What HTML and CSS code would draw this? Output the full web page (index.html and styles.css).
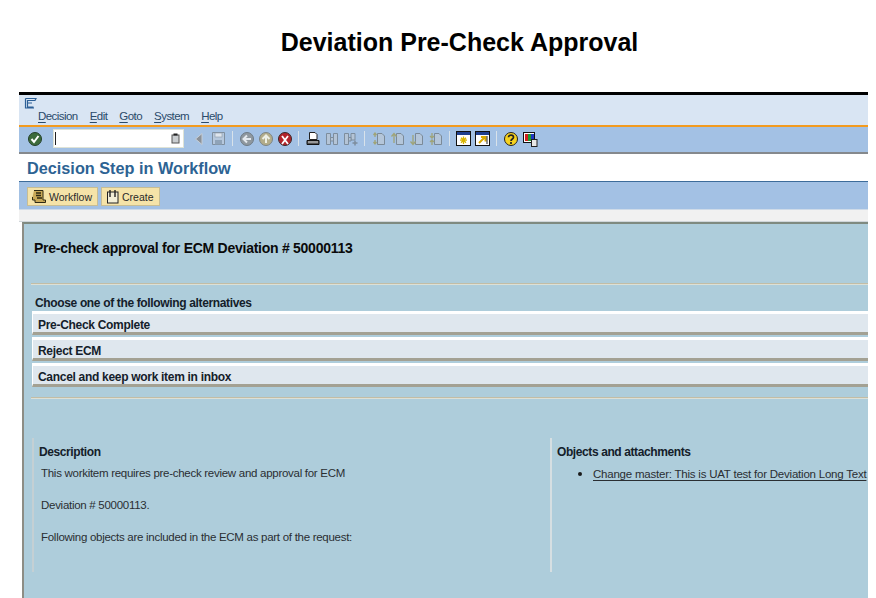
FILE: index.html
```html
<!DOCTYPE html>
<html lang="en">
<head>
<meta charset="utf-8">
<title>Deviation Pre-Check Approval</title>
<link rel="stylesheet" href="styles.css">
</head>
<body>
<h1 class="page-title">Deviation Pre-Check Approval</h1>
<div class="window">
  <div class="titlebar">
    <svg class="sys-icon" width="14" height="12" viewBox="0 0 14 12"><path d="M1.5 1.5H12L11 3.5H3.5V6H8M3.5 6V10H9.5M1.5 1.5V11H10" fill="none" stroke="#2c5f96" stroke-width="1.2"/></svg>
    <nav class="menu">
      <span><u>D</u>ecision</span><span><u>E</u>dit</span><span><u>G</u>oto</span><span><u>S</u>ystem</span><span><u>H</u>elp</span>
    </nav>
  </div>
  <div class="toolbar">
    <span class="ic ic-first"><svg width="16" height="16" viewBox="0 0 16 16"><circle cx="8" cy="8" r="6.500" fill="#3c6b3c" stroke="#24402a"/><path d="M4.500 8l2.500 3 4.500-6" fill="none" stroke="#fff" stroke-width="2"/></svg></span>
    <span class="cmd"><span class="caret"></span><svg width="9" height="11" viewBox="0 0 9 11"><rect x="1" y="2" width="7" height="8" fill="#c9cdd0" stroke="#555"/><rect x="2.500" y="0.500" width="4" height="2" fill="#222"/></svg></span>
    <span class="ic ic-gap"><svg width="12" height="12" viewBox="0 0 12 12"><path d="M9 .5V11.500L2.500 6Z" fill="#8b9198" stroke="#c5cdd6"/></svg></span>
    <span class="ic ic-save"><svg width="15" height="15" viewBox="0 0 15 15"><path d="M1.500 1.500H13.500V13.500H1.500Z" fill="#b6c8dd" stroke="#7f8f9f"/><rect x="4" y="2" width="7" height="4" fill="#dfe6ee" stroke="#8a98a6" stroke-width=".6"/><rect x="4" y="9" width="7" height="4.500" fill="#8fa3b8"/></svg></span>
    <span class="sep"></span>
    <span class="ic"><svg width="16" height="16" viewBox="0 0 16 16"><circle cx="8" cy="8" r="6.500" fill="#8f989f" stroke="#6e7a84"/><path d="M12 8H6M8 4.500L4.500 8 8 11.500" fill="none" stroke="#e4e9ee" stroke-width="2"/></svg></span>
    <span class="ic"><svg width="16" height="16" viewBox="0 0 16 16"><circle cx="8" cy="8" r="6.500" fill="#b3ad8a" stroke="#7d8484"/><path d="M8 12V6M4.500 8L8 4.500 11.500 8" fill="none" stroke="#eef0e6" stroke-width="2"/></svg></span>
    <span class="ic"><svg width="16" height="16" viewBox="0 0 16 16"><circle cx="8" cy="8" r="6.500" fill="#b3242a" stroke="#3a2a2a"/><path d="M5 5L11 13M11 5L5 13" stroke="#fff" stroke-width="1.800"/></svg></span>
    <span class="sep"></span>
    <span class="ic"><svg width="16" height="16" viewBox="0 0 16 16"><path d="M4.500 1.500H10L12 3.500V8.500H4.500Z" fill="#fff" stroke="#222"/><path d="M2 9.500H14V13.500H2Z" fill="#555" stroke="#111"/><path d="M3 11H13" stroke="#ddd"/></svg></span>
    <span class="ic"><svg width="16" height="16" viewBox="0 0 16 16"><g fill="#b4c4d6" stroke="#7d8d9d"><path d="M2.500 2.500H6.500V13.500H2.500Z"/><path d="M9.500 2.500H13.500V13.500H9.500Z"/><path d="M6.500 6.500H9.500V10H6.500Z"/></g></svg></span>
    <span class="ic"><svg width="16" height="16" viewBox="0 0 16 16"><g fill="#b4c4d6" stroke="#7d8d9d"><path d="M1.500 2.500H5.500V13.500H1.500Z"/><path d="M8 2.500H12V9H8Z"/><path d="M5.500 6.500H8V10H5.500Z"/></g><path d="M12 9.500V14.500M9.500 12H14.500" stroke="#7d8d9d" stroke-width="1.500"/></svg></span>
    <span class="sep"></span>
    <span class="ic"><svg width="16" height="16" viewBox="0 0 16 16"><path d="M6.500 2.500H11L13.500 5V13.500H6.500Z" fill="#b4c6da" stroke="#7b8a98"/><path d="M4 2V6M2.500 4L4 2 5.500 4M4 9V13M2.500 11L4 13 5.500 11" fill="none" stroke="#a0a478" stroke-width="1.300"/></svg></span>
    <span class="ic"><svg width="16" height="16" viewBox="0 0 16 16"><path d="M6.500 2.500H11L13.500 5V13.500H6.500Z" fill="#b4c6da" stroke="#7b8a98"/><path d="M4 3V12M1.500 5.500L4 2.500 6.500 5.500" fill="none" stroke="#a0a478" stroke-width="1.300"/></svg></span>
    <span class="ic"><svg width="16" height="16" viewBox="0 0 16 16"><path d="M6.500 2.500H11L13.500 5V13.500H6.500Z" fill="#b4c6da" stroke="#7b8a98"/><path d="M4 4V13M1.500 10.500L4 13.500 6.500 10.500" fill="none" stroke="#a0a478" stroke-width="1.300"/></svg></span>
    <span class="ic"><svg width="16" height="16" viewBox="0 0 16 16"><path d="M6.500 2.500H11L13.500 5V13.500H6.500Z" fill="#b4c6da" stroke="#7b8a98"/><path d="M4 2V7M2 5L4 7 6 5M4 9V14M2 11L4 9 6 11" fill="none" stroke="#a0a478" stroke-width="1.300"/></svg></span>
    <span class="sep"></span>
    <span class="ic"><svg width="15" height="15" viewBox="0 0 15 15"><rect x=".5" y=".5" width="14" height="14" fill="#fff" stroke="#111"/><rect x="1" y="1" width="13" height="3" fill="#1f3f8f"/><path d="M7.500 5.500V13M4 9.200H11M5 6.700L10 11.700M10 6.700L5 11.700" stroke="#d8b400" stroke-width="1.300"/></svg></span>
    <span class="ic"><svg width="15" height="15" viewBox="0 0 15 15"><rect x=".5" y=".5" width="14" height="14" fill="#fff" stroke="#111"/><rect x="1" y="1" width="13" height="3" fill="#1f3f8f"/><path d="M4 12L10 6M6 6H10.500V10.500" fill="none" stroke="#d8a800" stroke-width="2"/><path d="M12 5V13" stroke="#222"/></svg></span>
    <span class="sep"></span>
    <span class="ic"><svg width="16" height="16" viewBox="0 0 16 16"><circle cx="8" cy="8" r="6.500" fill="#f6d21f" stroke="#222"/><path d="M5.500 6.300C5.500 3.500 10.500 3.500 10.500 6.300C10.500 8 8 8 8 10" fill="none" stroke="#222" stroke-width="1.700"/><path d="M8 11V13" stroke="#222" stroke-width="1.700"/></svg></span>
    <span class="ic"><svg width="16" height="16" viewBox="0 0 16 16"><rect x="1.500" y="1.500" width="11" height="10" fill="#fff" stroke="#111"/><rect x="3" y="3" width="3" height="7" fill="#d02020"/><rect x="6" y="3" width="3" height="7" fill="#1f9a30"/><rect x="9" y="3" width="3" height="7" fill="#2038c0"/><rect x="9.500" y="8.500" width="5.500" height="7" fill="#e8e8e8" stroke="#222"/></svg></span>
  </div>
  <div class="heading">Decision Step in Workflow</div>
  <div class="appbar">
    <button class="btn" type="button"><svg width="16" height="15" viewBox="0 0 16 15"><path d="M3 1.500H12V11H14.500V13.500H4V11H1.500V8" fill="#c9a957" stroke="#2f2a15"/><path d="M5 4H10M5 6.500H10M6 9H11" stroke="#2f2a15" stroke-width="1.400"/></svg>Workflow</button>
    <button class="btn" type="button"><svg width="15" height="15" viewBox="0 0 15 15"><rect x="2.500" y="3" width="10.500" height="11" fill="#f3efd8" stroke="#222"/><path d="M5 1V8M10 1V8" stroke="#222" stroke-width="1.400"/></svg>Create</button>
  </div>
  <div class="strip"></div>
  <main class="panel">
    <h2 class="subject">Pre-check approval for ECM Deviation # 50000113</h2>
    <hr class="rule">
    <div class="choose">Choose one of the following alternatives</div>
    <div class="option">Pre-Check Complete</div>
    <div class="option">Reject ECM</div>
    <div class="option">Cancel and keep work item in inbox</div>
    <hr class="rule rule-low">
    <div class="columns">
      <section class="col col-desc">
        <h3>Description</h3>
        <p>This workitem requires pre-check review and approval for ECM</p>
        <p>Deviation # 50000113.</p>
        <p>Following objects are included in the ECM as part of the request:</p>
      </section>
      <section class="col col-obj">
        <h3>Objects and attachments</h3>
        <ul><li><a href="#">Change master: This is UAT test for Deviation Long Text</a></li></ul>
      </section>
    </div>
  </main>
</div>
</body>
</html>
```
FILE: styles.css
```css
* { box-sizing: border-box; }
html, body { margin: 0; padding: 0; background: #fff; }
body { height: 598px; overflow: hidden; font-family: "Liberation Sans", Arial, sans-serif; color: #1a1a1a; }
.page-title { margin: 0; height: 92px; padding: 28px 0 0 43px; text-align: center; font-size: 25px; line-height: 28px; font-weight: 700; color: #000; }
.window { margin-left: 19px; width: 849px; height: 506px; overflow: hidden; }
.titlebar { height: 35px; border-top: 3px solid #000; background: #d9e5f3; border-bottom: 2px solid #f39b1f; position: relative; padding: 0 0 0 19px; }
.sys-icon { position: absolute; left: 5px; top: 2px; }
.menu { display: flex; gap: 12px; padding-top: 14px; font-size: 11.500px; line-height: 14px; letter-spacing: -.55px; color: #2a4a6a; }
.menu u { text-underline-offset: 2px; }
.toolbar { height: 27px; display: flex; align-items: center; background: #a3c1e4; border-bottom: 2px solid #85898d; padding: 0 0 2px 6px; }
.ic { width: 19px; height: 19px; flex: none; display: flex; align-items: center; justify-content: center; }
.ic-first { margin-right: 9px; }
.ic-gap { margin-left: 5px; }
.ic-save { margin-left: 1px; }
.cmd { width: 131px; height: 19px; flex: none; background: #fff; border: 1px solid #dfe3d6; display: flex; align-items: center; justify-content: space-between; padding: 0 3px 0 1px; }
.caret { width: 1px; height: 13px; background: #222; }
.sep { width: 1px; height: 15px; background: #d8e2ea; margin: 0 4px; flex: none; }
.heading { height: 28px; border-bottom: 1px solid #3d6c9a; padding: 5px 0 0 8px; font-size: 16.250px; line-height: 18px; font-weight: 700; color: #2d6393; }
.appbar { height: 28px; background: #a3c1e4; border-bottom: 1px solid #cfdbe8; display: flex; align-items: flex-start; gap: 3px; padding: 5px 0 0 8px; }
.btn { height: 19px; margin: 0; padding: 0 5px 0 3px; display: flex; align-items: center; gap: 2px; background: #f5e3a8; border: 1px solid #c7bd94; font: 10.500px/14px "Liberation Sans", Arial, sans-serif; color: #2a2a2a; }
.strip { height: 12px; background: #f1f1f1; border-bottom: 1px solid #d0d6da; }
.panel { margin-left: 3px; height: 380px; background: #aecddb; border-top: 2px solid #7f8a80; border-left: 2px solid #8d8d85; padding-top: 15px; }
.subject { margin: 0 0 0 10px; height: 44px; font-size: 14px; line-height: 18px; letter-spacing: -.26px; font-weight: 700; color: #0a0a0a; }
.rule { margin: 0 0 0 7px; height: 2px; border: 0; border-top: 1px solid #c2bda6; background: #dde0d6; }
.choose { margin: 11px 0 1px 11px; font-size: 12px; line-height: 14px; letter-spacing: -.35px; font-weight: 700; color: #14202a; }
.option { margin: 0 0 2px 8px; height: 24px; padding: 4px 0 0 5px; background: #dfe7ee; border-top: 3px solid #fff; border-left: 1px solid #fff; border-bottom: 3px solid #a3a193; font-size: 12px; line-height: 14px; letter-spacing: -.3px; font-weight: 700; color: #14202a; }
.rule-low { margin-top: 10px; }
.columns { display: flex; margin: 39px 0 0 8px; height: 134px; }
.col { border-left: 2px solid #d6dfe2; height: 134px; }
.col-desc { flex: none; width: 518px; border-left-color: #c4d0d4; padding-left: 5px; }
.col-obj { flex: 1; min-width: 0; padding-left: 5px; white-space: nowrap; }
.col h3 { margin: 7px 0 7px; font-size: 12px; line-height: 14px; letter-spacing: -.4px; font-weight: 700; color: #14202a; }
.col p { margin: 0 0 18px 2px; font-size: 11.500px; line-height: 14px; letter-spacing: -.28px; color: #2a2e32; }
.col ul { margin: 3px 0 0; padding: 0 0 0 36px; font-size: 11.500px; line-height: 14px; letter-spacing: -.22px; }
.col li::marker { font-size: 14px; }
.col a { color: #2a2e32; text-underline-offset: 2px; }
```
